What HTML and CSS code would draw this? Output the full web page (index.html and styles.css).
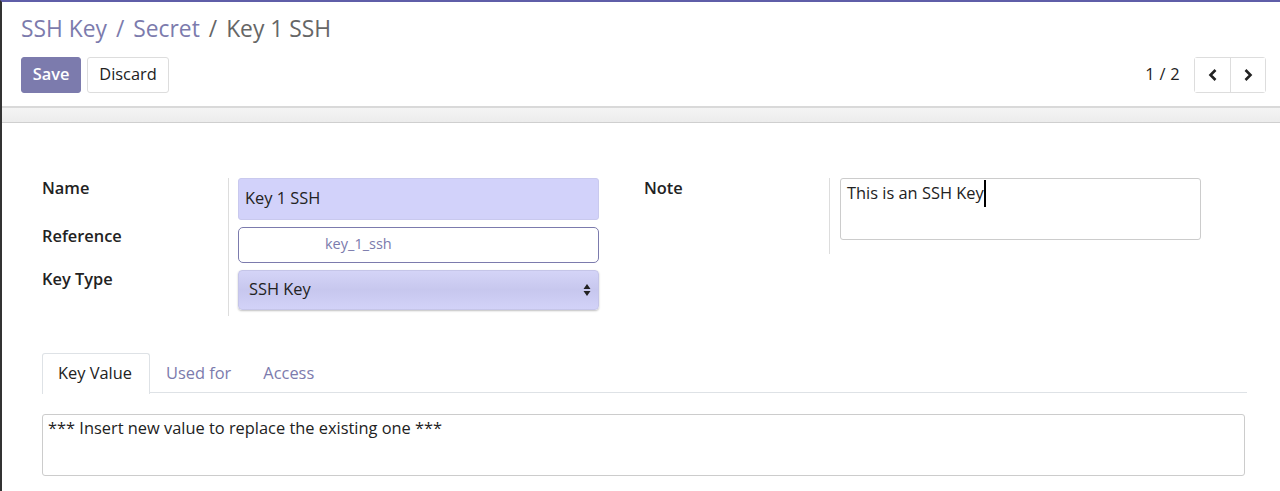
FILE: index.html
```html
<!DOCTYPE html>
<html>
<head>
<meta charset="utf-8">
<link rel="stylesheet" href="styles.css">
</head>
<body>
<div class="app">
  <div class="control-panel">
    <div class="breadcrumb">
      <span class="crumb-link">SSH Key</span><span class="sep crumb-link">/</span><span class="crumb-link">Secret</span><span class="sep">/</span><span class="crumb-active">Key 1 SSH</span>
    </div>
    <div class="cp-bottom">
      <div class="buttons">
        <button class="btn btn-primary">Save</button>
        <button class="btn btn-secondary">Discard</button>
      </div>
      <div class="pager">
        <span class="pager-value">1 / 2</span>
        <div class="pager-group">
          <button class="pager-btn"><svg width="12" height="14" viewBox="0 0 12 14"><path d="M8.5 2 L3.5 7 L8.5 12" fill="none" stroke="#222" stroke-width="2.6" stroke-linejoin="miter"/></svg></button>
          <button class="pager-btn"><svg width="12" height="14" viewBox="0 0 12 14"><path d="M3.5 2 L8.5 7 L3.5 12" fill="none" stroke="#222" stroke-width="2.6" stroke-linejoin="miter"/></svg></button>
        </div>
      </div>
    </div>
  </div>
  <div class="band"></div>
  <div class="sheet">
    <div class="groups">
      <div class="group group-left">
        <div class="labels">
          <div class="label l-name">Name</div>
          <div class="label l-ref">Reference</div>
          <div class="label l-type">Key Type</div>
        </div>
        <div class="fields">
          <div class="input input-name">Key 1 SSH</div>
          <div class="input input-ref">key_1_ssh</div>
          <div class="input input-select"><span>SSH Key</span>
            <svg class="arrows" width="8" height="14" viewBox="0 0 8 14"><path d="M4 1 L7.5 6 L0.5 6 Z M0.5 8 L7.5 8 L4 13 Z" fill="#222"/></svg>
          </div>
        </div>
      </div>
      <div class="group group-right">
        <div class="labels labels-right">
          <div class="label l-name">Note</div>
        </div>
        <div class="fields fields-right">
          <div class="input textarea-note">This is an SSH Key<span class="caret"></span></div>
        </div>
      </div>
    </div>
    <div class="tabs">
      <div class="tab active">Key Value</div>
      <div class="tab">Used for</div>
      <div class="tab">Access</div>
    </div>
    <div class="tab-content">
      <div class="input textarea-value">*** Insert new value to replace the existing one ***</div>
    </div>
  </div>
</div>
</body>
</html>
```

FILE: styles.css
```css
* { box-sizing: border-box; }
html, body { margin: 0; padding: 0; background: #fff; }
body {
  font-family: "Open Sans", "DejaVu Sans", sans-serif;
  font-size: 16.4px;
  color: #222;
}
.app {
  border-top: 2px solid #5f5ea8;
  border-left: 2px solid #333;
  height: 491px;
  overflow: hidden;
}
.control-panel {
  padding: 12px 14px 0 19px;
  height: 104px;
}
.breadcrumb {
  font-size: 22.8px;
  line-height: 30px;
  height: 30px;
  white-space: nowrap;
}
.crumb-link { color: #7c7bad; }
.sep { margin: 0 9px; color: #666; }
.sep.crumb-link { color: #7c7bad; }
.crumb-active { color: #666; }
.cp-bottom {
  margin-top: 13px;
  display: flex;
  justify-content: space-between;
  align-items: center;
}
.buttons { display: flex; gap: 6px; }
.btn {
  height: 36px;
  font-family: inherit;
  font-size: 16.4px;
  border-radius: 3px;
  padding: 0 0 3px;
  cursor: pointer;
}
.btn-primary {
  background: #7c7bad;
  border: 1px solid #7c7bad;
  color: #fff;
  font-weight: 600;
  width: 60px;
}
.btn-secondary {
  background: #fff;
  border: 1px solid #ddd;
  color: #222;
  width: 82px;
}
.pager { display: flex; align-items: center; gap: 14px; }
.pager-value { font-size: 16.4px; color: #222; letter-spacing: 0.3px; margin-bottom: 4px; }
.pager-group {
  display: flex;
  border: 1px solid #ddd;
  border-radius: 3px;
  height: 36px;
}
.pager-btn {
  width: 35px;
  height: 34px;
  background: #fff;
  border: none;
  padding: 0;
  display: flex;
  align-items: center;
  justify-content: center;
}
.pager-btn + .pager-btn { border-left: 1px solid #ddd; }
.band {
  height: 17px;
  border-top: 2px solid #d9d9d9;
  border-bottom: 1px solid #cfcfcf;
  background: linear-gradient(#f4f4f4, #ececec);
}
.sheet {
  padding: 55px 33px 0 40px;
}
.groups { display: flex; }
.group { display: flex; }
.group-left { width: 602px; }
.labels {
  width: 187px;
  border-right: 1px solid #ddd;
  position: relative;
  height: 138px;
}
.label {
  font-weight: 600;
  font-size: 16.4px;
  height: 0;
}
.labels .label { position: absolute; left: 0; }
.labels .l-name { top: -2px; }
.labels .l-ref { top: 46px; }
.labels .l-type { top: 89px; }
.fields {
  padding-left: 9px;
  display: flex;
  flex-direction: column;
}
.input {
  width: 361px;
  border-radius: 3px;
  color: #222;
  white-space: nowrap;
}
.input-name {
  height: 42px;
  background: #d2d2fa;
  border: 1px solid #c9c9ee;
  padding: 0 6px;
  line-height: 38px;
}
.input-ref {
  margin-top: 7px;
  height: 36px;
  border: 1px solid #7c7bad;
  border-radius: 5px;
  padding-left: 86px;
  line-height: 32px;
  color: #7c7bad;
  font-size: 14.5px;
}
.input-select {
  margin-top: 7px;
  height: 40px;
  border: 1px solid #c5c5e8;
  border-radius: 4px;
  background: linear-gradient(#d4d4f7, #c7c7ee 50%, #d2d2f8);
  box-shadow: 0 1px 2px rgba(0,0,0,0.25);
  display: flex;
  align-items: center;
  justify-content: space-between;
  padding: 0 7px 3px 10px;
}
.arrows { display: block; margin-top: 3px; }
.labels-right {
  width: 186px;
  height: 76px;
}
.labels-right .label { left: 0; }
.fields-right { padding-left: 10px; }
.textarea-note {
  height: 62px;
  border: 1px solid #ccc;
  padding: 1px 6px;
  line-height: 24px;
  position: relative;
}
.caret {
  display: inline-block;
  width: 2px;
  height: 27px;
  background: #000;
  vertical-align: -8px;
}
.tabs {
  margin-top: 37px;
  display: flex;
  border-bottom: 1px solid #dee2e6;
  height: 40px;
}
.tab {
  padding: 0 15px;
  height: 40px;
  line-height: 38px;
  color: #7c7bad;
  border: 1px solid transparent;
  border-bottom: none;
}
.tab.active {
  color: #222;
  border-color: #dee2e6;
  border-radius: 3px 3px 0 0;
  background: #fff;
  margin-bottom: -1px;
  height: 41px;
  width: 108px;
  padding: 0 0 0 15px;
}
.tab-content { padding-top: 21px; }
.textarea-value {
  width: 1203px;
  height: 62px;
  border: 1px solid #ccc;
  padding: 0 5px;
  line-height: 26px;
}
```
